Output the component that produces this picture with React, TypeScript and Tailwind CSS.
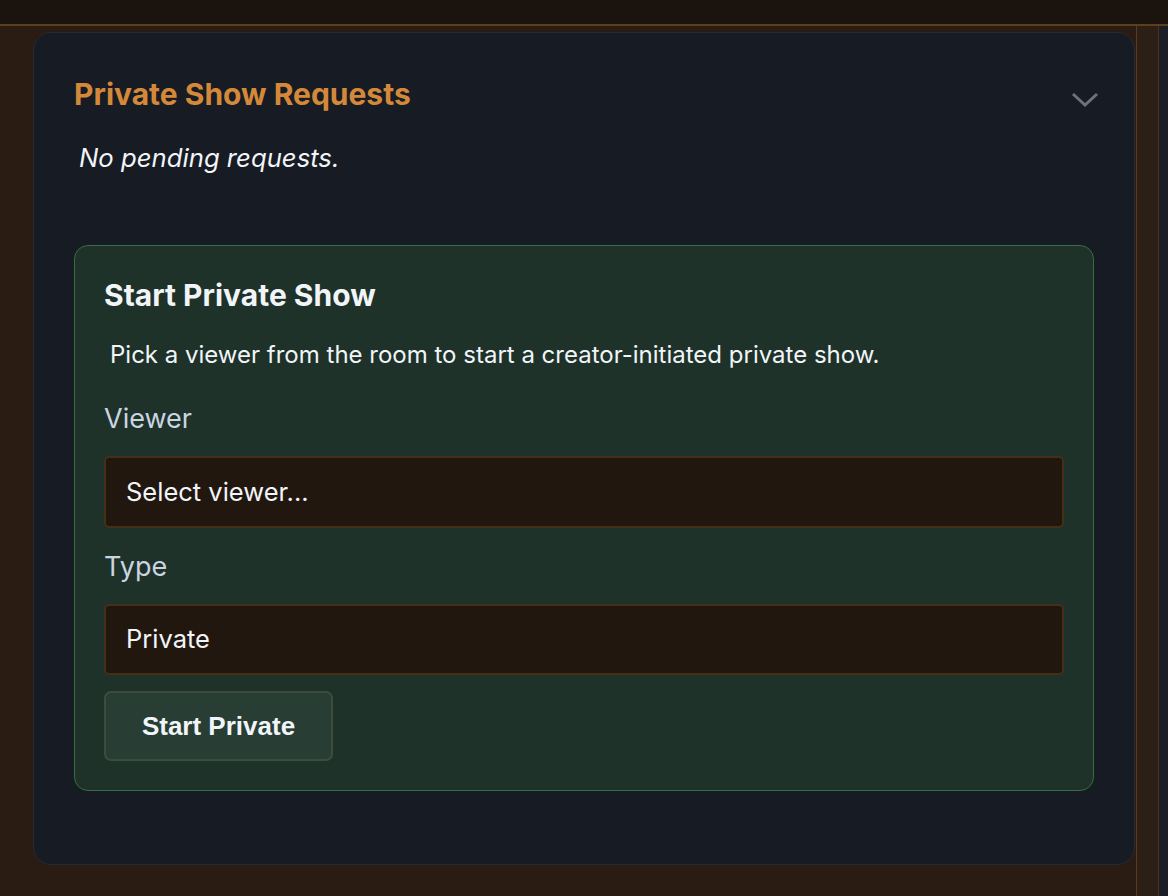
import React from "react"

const font = "font-['Inter','Noto_Sans',sans-serif]"

export default function App() {
  return (
    <div className={`w-full h-[896px] bg-[#2a1c12] flex flex-col overflow-hidden ${font}`}>
      {/* top bar */}
      <div className="h-[26px] shrink-0 bg-[#1b130e] border-b-2 border-[#5c3f1f]" />
      <div className="flex flex-1">
        {/* main column */}
        <div className="w-[1136px] pl-[33px] pt-[6px]">
          <div className="w-[1102px] h-[833px] bg-[#171b23] border border-[#252b36] rounded-[18px] pt-[43px] px-[40px]">
            <div className="flex items-start justify-between">
              <h2 className="text-[30px] leading-[36px] font-bold text-[#d4893a]">Private Show Requests</h2>
              <svg width="30" height="18" viewBox="0 0 30 18" className="mt-[15px] mr-[-6px]" fill="none">
                <path d="M3 3 L15 14 L27 3" stroke="#6b7280" strokeWidth="3" />
              </svg>
            </div>
            <p className="mt-[30px] pl-[5px] text-[25.7px] leading-[32px] italic text-[#f1f5f9]">No pending requests.</p>

            {/* start private show box */}
            <div className="mt-[71px] w-[1020px] bg-[#1e3229] border border-[#33703f] rounded-[14px] pt-[31px] pb-[29px] px-[29px]">
              <h3 className="text-[30px] leading-[36px] font-bold text-[#f1f5f9]">Start Private Show</h3>
              <p className="mt-[26px] pl-[6px] text-[24px] leading-[32px] text-[#f1f5f9]">
                Pick a viewer from the room to start a creator-initiated private show.
              </p>
              <div className="mt-[31px] text-[27px] leading-[34px] text-[#cbd5e1]">Viewer</div>
              <div className="mt-[20px] h-[72px] w-[960px] bg-[#21170f] border-2 border-[#472e17] rounded-[5px] flex items-center px-[20px] text-[25.5px] text-[#f1f5f9]">
                Select viewer...
              </div>
              <div className="mt-[22px] text-[27px] leading-[34px] text-[#cbd5e1]">Type</div>
              <div className="mt-[20px] h-[71px] w-[960px] bg-[#21170f] border-2 border-[#472e17] rounded-[5px] flex items-center px-[20px] text-[25.5px] text-[#f1f5f9]">
                Private
              </div>
              <button className="mt-[16px] h-[70px] w-[229px] bg-[#283d33] border-2 border-[#3c4d3e] rounded-[7px] text-[26px] font-bold text-[#f1f5f9] font-['Liberation_Sans','Arial',sans-serif]">
                Start Private
              </button>
            </div>
          </div>
        </div>
        <div className="w-px bg-[#5a3b1b]" />
        <div className="w-[21px] bg-[#2c1f15]" />
        <div className="w-px bg-[#4a3320]" />
        <div className="flex-1 bg-[#1b1e25]" />
      </div>
    </div>
  )
}
